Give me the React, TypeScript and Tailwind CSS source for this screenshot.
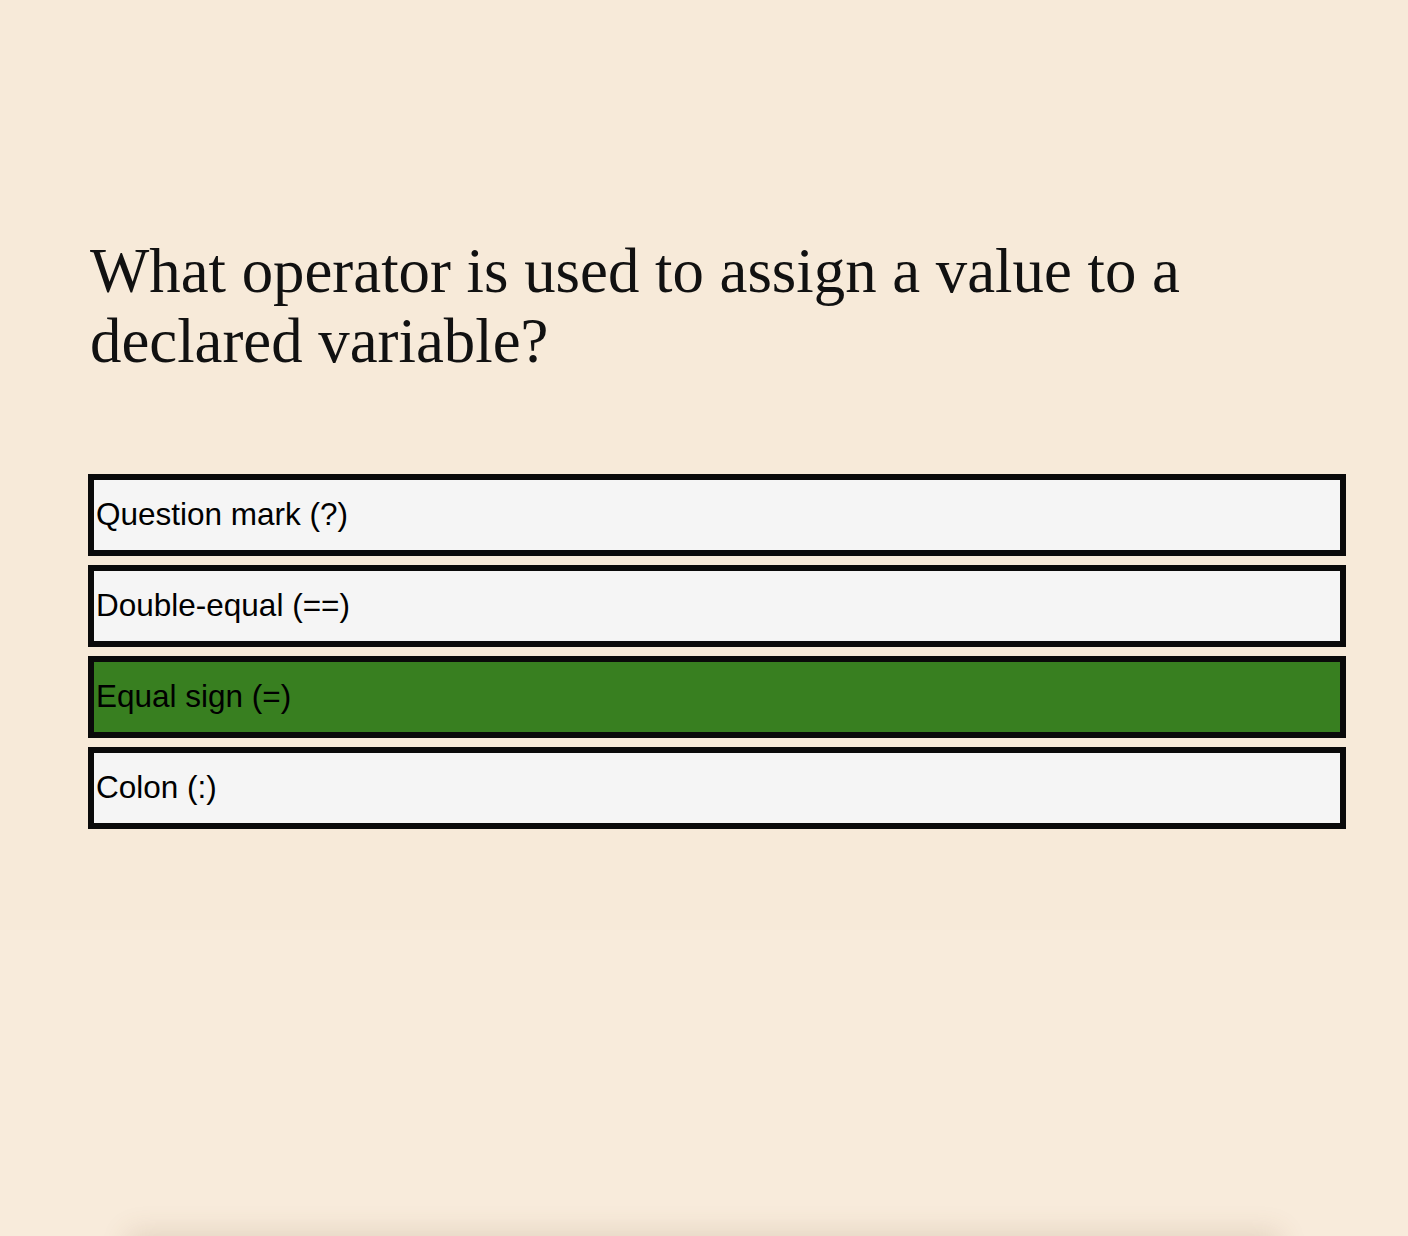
import React from "react";

const options = [
  { label: "Question mark (?)", correct: false },
  { label: "Double-equal (==)", correct: false },
  { label: "Equal sign (=)", correct: true },
  { label: "Colon (:)", correct: false },
];

export default function App() {
  return (
    <div className="relative h-[1236px] w-full overflow-hidden bg-[#f7ead9]">
      <div className="flex h-[930px] flex-col pl-[88px] pt-[236px]">
        <h1
          className="ml-[2px] w-[1256px] text-[62.8px] font-normal leading-[70px] text-[#111]"
          style={{ fontFamily: '"Liberation Serif", "Times New Roman", serif' }}
        >
          What operator is used to assign a value to a declared variable?
        </h1>
        <div className="mt-[98px] flex w-[1258px] flex-col gap-[9px]">
          {options.map((o) => (
            <button
              key={o.label}
              className={`flex h-[82px] items-center border-[6px] border-[#0a0a0a] pl-[2px] text-left text-[31.5px] text-black ${
                o.correct ? "bg-[#387f20]" : "bg-[#f5f5f5]"
              }`}
              style={{ fontFamily: '"Liberation Sans", Arial, sans-serif' }}
            >
              {o.label}
            </button>
          ))}
        </div>
      </div>
      <div className="h-[306px] bg-[#f8ebdb]" />
      <div className="absolute left-[140px] right-[140px] top-[1244px] h-[20px] shadow-[0_0_28px_12px_rgba(120,90,50,0.16)]" />
    </div>
  );
}
